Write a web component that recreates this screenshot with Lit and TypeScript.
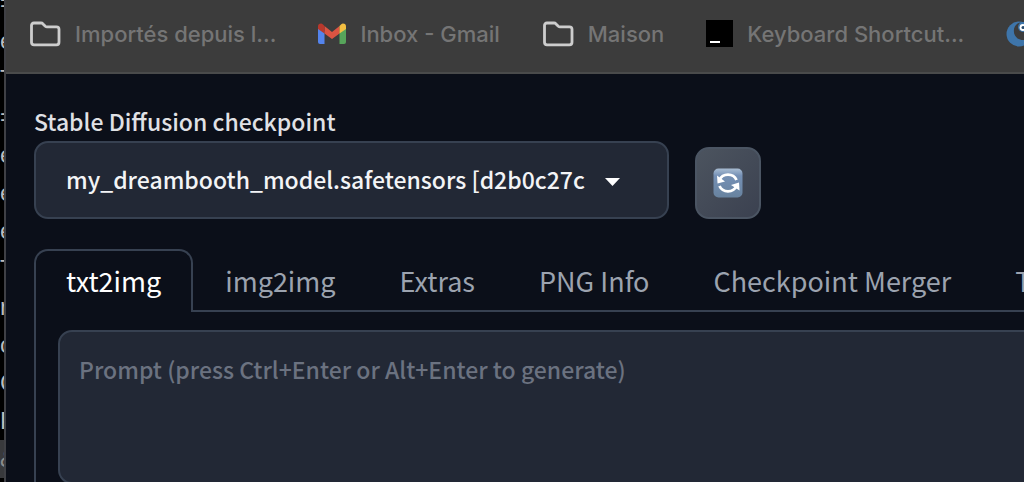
import { LitElement, html, css } from "lit";
import { customElement, state } from "lit/decorators.js";

const folderIcon = html`<svg class="icon folder" viewBox="0 0 32 26" aria-hidden="true">
  <path d="M2.500 4.500q0-2.500 2.500-2.500h7q1.200 0 2 .9l2.300 2.300q.7.600 1.700.6h9.500q2.500 0 2.500 2.500v13q0 2.500-2.500 2.500h-22.500q-2.500 0-2.500-2.500z" fill="none" stroke="#cdcdcd" stroke-width="2.800" stroke-linejoin="round"/>
</svg>`;

const gmailIcon = html`<svg class="icon gmail" viewBox="0 0 28 22" aria-hidden="true">
  <path d="M0 4.500 6.500 8.500V21H2Q0 21 0 19z" fill="#5484ed"/>
  <path d="M21.500 8.500 28 4.500V19Q28 21 26 21H21.500z" fill="#57a55b"/>
  <path d="M6.500 3 14 9 21.500 3V10.500L14 16 6.500 10.500z" fill="#dc5442"/>
  <path d="M0 3.500Q0 .5 3 .5 4 .5 5 1.500L6.500 3V10.500L0 6z" fill="#b8382c"/>
  <path d="M28 3.500Q28 .5 25 .5 24 .5 23 1.500L21.500 3V10.500L28 6z" fill="#f3bf42"/>
</svg>`;

const terminalIcon = html`<svg class="icon terminal" viewBox="0 0 27 27" aria-hidden="true">
  <path d="M0 0h27v27H0z" fill="#000"/>
  <path d="M4 21h10v2H4z" fill="#fff"/>
</svg>`;

const moonIcon = html`<svg class="icon moon" viewBox="0 0 26 26" aria-hidden="true">
  <circle cx="13" cy="13" r="12.500" fill="#3e75aa"/>
  <path d="M14 1.500C8 3 6.500 10 9 14.500 12 20 20 20 26 17V8z" fill="#3c3c3c"/>
  <circle cx="17" cy="6" r="5" fill="#3e75aa"/>
  <circle cx="17" cy="6.500" r="3.400" fill="#fff"/>
  <circle cx="17" cy="6.500" r="1.500" fill="#24486b"/>
</svg>`;

const refreshIcon = html`<svg class="refresh-icon" viewBox="0 0 30 30" aria-hidden="true">
  <defs>
    <linearGradient id="tile" x1="0" y1="0" x2="0" y2="1">
      <stop offset="0" stop-color="#a9bdd3"/>
      <stop offset=".25" stop-color="#7590b5"/>
      <stop offset="1" stop-color="#68839f"/>
    </linearGradient>
  </defs>
  <rect x=".5" y=".5" width="29" height="29" rx="5" fill="url(#tile)"/>
  <g fill="none" stroke="#fff" stroke-width="2.800">
    <path d="M6.500 12A9.200 8.600 0 0 1 23.500 12"/>
    <path d="M23.500 18A9.200 8.600 0 0 1 6.500 18"/>
  </g>
  <path d="M4 7.500 4.500 15.500 12 13.500z" fill="#fff"/>
  <path d="M26.500 22.500 26 14.500 18 17z" fill="#fff"/>
</svg>`;

const bookmarks = [
  { label: "Importés depuis l...", icon: folderIcon },
  { label: "Inbox - Gmail", icon: gmailIcon },
  { label: "Maison", icon: folderIcon },
  { label: "Keyboard Shortcut...", icon: terminalIcon },
  { label: "", icon: moonIcon },
];

const tabs = ["txt2img", "img2img", "Extras", "PNG Info", "Checkpoint Merger", "Train"];

const backgroundLines = ["=", "e", "T", "=", "e", "e", "e", "T", "r", "c", "C", "P", "&"];

@customElement("app-root")
export class AppRoot extends LitElement {
  @state() private active = "txt2img";

  static styles = css`
    :host {
      display: flex;
      height: 100vh;
      overflow: hidden;
      background: #000;
      font-family: "Noto Sans CJK SC", "Noto Sans", sans-serif;
      font-size: 23px;
      font-weight: 500;
      color: #e0e1e5;
    }
    * { box-sizing: border-box; }
    .behind {
      flex: none;
      width: 4px;
      overflow: hidden;
      display: flex;
      flex-direction: column;
      margin-top: -16px;
      font: 24px/38px "Liberation Sans", sans-serif;
      color: #bdbdbd;
    }
    .behind span { flex: none; }
    .behind span:last-child { background: #38393c; color: #8c8c8c; }
    .window {
      flex: 1;
      min-width: 0;
      display: flex;
      flex-direction: column;
      border-left: 2px solid #3f4045;
      background: #0b0f19;
    }
    .bookmarks {
      flex: none;
      display: flex;
      gap: 42px;
      height: 74px;
      padding: 0 0 5px 23px;
      align-items: center;
      overflow: hidden;
      background: #3c3c3c;
      border-bottom: 2px solid #4a4b4b;
      font-family: Inter, sans-serif;
      font-size: 22px;
    }
    .bookmark {
      flex: none;
      display: flex;
      align-items: center;
      gap: 14px;
      color: #757575;
      text-decoration: none;
      white-space: nowrap;
    }
    .icon { display: block; flex: none; }
    .folder { width: 32px; height: 26px; }
    .gmail { width: 28px; height: 22px; }
    .terminal { width: 27px; height: 27px; }
    .moon { width: 26px; height: 26px; }
    main {
      flex: 1;
      min-height: 0;
      display: flex;
      flex-direction: column;
      padding: 32px 0 0 28px;
    }
    .model {
      flex: none;
      display: flex;
      align-items: flex-end;
      gap: 26px;
    }
    .field { display: flex; flex-direction: column; width: 635px; }
    .field label { line-height: 31px; padding-bottom: 4px; }
    .select-box { display: grid; align-items: center; }
    .select-box > * { grid-area: 1 / 1; }
    select {
      appearance: none;
      width: 100%;
      height: 78px;
      padding: 0 70px 2px 30px;
      border: 2px solid #374151;
      border-radius: 14px;
      background: #222835;
      color: #f3f4f6;
      font: inherit;
      text-overflow: clip;
    }
    .caret {
      justify-self: end;
      width: 15px;
      height: 8px;
      margin: 4px 49px 0 0;
      pointer-events: none;
    }
    .refresh {
      width: 66px;
      height: 72px;
      padding: 0;
      display: grid;
      place-items: center;
      border: 2px solid #4b5563;
      border-radius: 14px;
      background: linear-gradient(135deg, #4c545f, #3b4150);
    }
    .refresh-icon { width: 30px; height: 30px; }
    .tabs {
      flex: none;
      display: flex;
      margin-top: 30px;
      height: 63px;
      border-bottom: 2px solid #374151;
    }
    .tab {
      flex: none;
      padding: 0 30px;
      border: 2px solid transparent;
      border-bottom: 0;
      background: none;
      color: #9ca3af;
      font: inherit;
      font-size: 27px;
      font-weight: 400;
      white-space: nowrap;
    }
    .tab.active {
      margin-bottom: -2px;
      padding-bottom: 2px;
      border-color: #374151;
      border-radius: 14px 14px 0 0;
      background: #0b0f19;
      color: #fff;
    }
    .panel {
      flex: 1;
      min-height: 0;
      display: flex;
      padding: 18px 0 0 22px;
      border-left: 2px solid #374151;
      overflow: hidden;
    }
    textarea {
      flex: 1;
      height: 154px;
      margin-right: -20px;
      padding: 18px 19px;
      border: 2px solid #374151;
      border-radius: 14px;
      background: #222835;
      color: #f3f4f6;
      font: inherit;
      line-height: 38px;
      resize: none;
    }
    textarea::placeholder { color: #6b7280; opacity: 1; }
  `;

  render() {
    return html`
      <div class="behind" aria-hidden="true">
        ${backgroundLines.map((t) => html`<span>${t}</span>`)}
      </div>
      <div class="window">
        <nav class="bookmarks" aria-label="Bookmarks">
          ${bookmarks.map((b) => html`<a class="bookmark" href="#">${b.icon}<span>${b.label}</span></a>`)}
        </nav>
        <main>
          <div class="model">
            <div class="field">
              <label for="checkpoint">Stable Diffusion checkpoint</label>
              <div class="select-box">
                <select id="checkpoint">
                  <option>my_dreambooth_model.safetensors [d2b0c27c</option>
                </select>
                <svg class="caret" viewBox="0 0 15 8" aria-hidden="true"><path d="M0 0h15L7.500 8z" fill="#fff"/></svg>
              </div>
            </div>
            <button class="refresh" aria-label="Refresh">${refreshIcon}</button>
          </div>
          <div class="tabs" role="tablist">
            ${tabs.map(
              (t) => html`<button
                class="tab ${t === this.active ? "active" : ""}"
                role="tab"
                aria-selected=${t === this.active}
                @click=${() => (this.active = t)}
              >${t}</button>`
            )}
          </div>
          <div class="panel" role="tabpanel">
            <textarea aria-label="Prompt" placeholder="Prompt (press Ctrl+Enter or Alt+Enter to generate)"></textarea>
          </div>
        </main>
      </div>
    `;
  }
}
